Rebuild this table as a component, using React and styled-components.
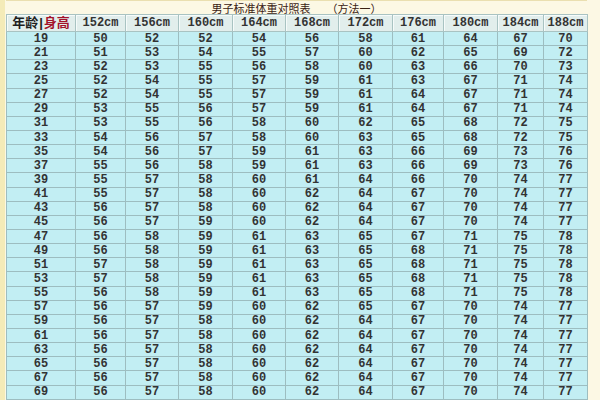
import React from 'react'
import styled, { createGlobalStyle } from 'styled-components'

const GlobalStyle = createGlobalStyle`
    html, body {
        margin: 0;
        padding: 0;
        background: #fcf8e4;
    }
`

const heights = [152, 156, 160, 164, 168, 172, 176, 180, 184, 188]
const colWidths = [69, 50, 53, 54, 53, 53, 54, 51, 54, 46, 44]

const rows = [
    [19, 50, 52, 52, 54, 56, 58, 61, 64, 67, 70],
    [21, 51, 53, 54, 55, 57, 60, 62, 65, 69, 72],
    [23, 52, 53, 55, 56, 58, 60, 63, 66, 70, 73],
    [25, 52, 54, 55, 57, 59, 61, 63, 67, 71, 74],
    [27, 52, 54, 55, 57, 59, 61, 64, 67, 71, 74],
    [29, 53, 55, 56, 57, 59, 61, 64, 67, 71, 74],
    [31, 53, 55, 56, 58, 60, 62, 65, 68, 72, 75],
    [33, 54, 56, 57, 58, 60, 63, 65, 68, 72, 75],
    [35, 54, 56, 57, 59, 61, 63, 66, 69, 73, 76],
    [37, 55, 56, 58, 59, 61, 63, 66, 69, 73, 76],
    [39, 55, 57, 58, 60, 61, 64, 66, 70, 74, 77],
    [41, 55, 57, 58, 60, 62, 64, 67, 70, 74, 77],
    [43, 56, 57, 58, 60, 62, 64, 67, 70, 74, 77],
    [45, 56, 57, 59, 60, 62, 64, 67, 70, 74, 77],
    [47, 56, 58, 59, 61, 63, 65, 67, 71, 75, 78],
    [49, 56, 58, 59, 61, 63, 65, 68, 71, 75, 78],
    [51, 57, 58, 59, 61, 63, 65, 68, 71, 75, 78],
    [53, 57, 58, 59, 61, 63, 65, 68, 71, 75, 78],
    [55, 56, 58, 59, 61, 63, 65, 68, 71, 75, 78],
    [57, 56, 57, 59, 60, 62, 65, 67, 70, 74, 77],
    [59, 56, 57, 58, 60, 62, 64, 67, 70, 74, 77],
    [61, 56, 57, 58, 60, 62, 64, 67, 70, 74, 77],
    [63, 56, 57, 58, 60, 62, 64, 67, 70, 74, 77],
    [65, 56, 57, 58, 60, 62, 64, 67, 70, 74, 77],
    [67, 56, 57, 58, 60, 62, 64, 67, 70, 74, 77],
    [69, 56, 57, 58, 60, 62, 64, 67, 70, 74, 77],
]

const App = () => {
    return (
        <Page>
            <GlobalStyle />
            <LeftBand />
            <Sheet>
                <TitleBar>
                    <Title>男子标准体重对照表</Title>
                    <Title>（方法一）</Title>
                </TitleBar>
                <Table>
                    <colgroup>
                        {colWidths.map((w, i) => (
                            <col key={i} style={{ width: w }} />
                        ))}
                    </colgroup>
                    <thead>
                        <tr>
                            <HeadCell>
                                <AgeLabel>年龄</AgeLabel>
                                <Divider>|</Divider>
                                <HeightLabel>身高</HeightLabel>
                            </HeadCell>
                            {heights.map((h) => (
                                <HeadCell key={h}>{h}cm</HeadCell>
                            ))}
                        </tr>
                    </thead>
                    <tbody>
                        {rows.map((r) => (
                            <Row key={r[0]}>
                                {r.map((v, i) => (
                                    <Cell key={i}>{v}</Cell>
                                ))}
                            </Row>
                        ))}
                    </tbody>
                </Table>
            </Sheet>
        </Page>
    )
}

export default App

const Page = styled.div`
    display: flex;
    width: 600px;
    height: 400px;
    overflow: hidden;
    background: #fcf8e4;
`

const LeftBand = styled.div`
    width: 5px;
    flex: none;
    background: #f4ebb8;
`

const Sheet = styled.div`
    display: flex;
    flex-direction: column;
    padding-left: 1px;
`

const TitleBar = styled.div`
    height: 14px;
    display: flex;
    align-items: center;
    justify-content: center;
    gap: 16px;
    width: 581px;
    border-top: 1px solid #eadfb0;
    box-sizing: border-box;
`

const Title = styled.span`
    font-family: 'Noto Sans CJK SC', sans-serif;
    font-size: 11px;
    line-height: 12px;
    color: #3a2214;
`

const Table = styled.table`
    table-layout: fixed;
    width: 581px;
    border-collapse: collapse;
    font-family: 'Liberation Mono', monospace;
    font-weight: bold;
    font-size: 12px;
`

const HeadCell = styled.th`
    height: 16px;
    padding: 0;
    text-align: center;
    background: #e2eeec;
    color: #333;
    font-weight: bold;
    border: 1px solid #a9c3c2;
    box-shadow: inset 1px 1px 0 #f6fbfa;
    line-height: 14px;
    white-space: nowrap;
`

const AgeLabel = styled.span`
    font-family: 'Noto Sans CJK SC', sans-serif;
    font-size: 13px;
    color: #1e1e1e;
`

const Divider = styled.span`
    font-family: 'Liberation Sans', sans-serif;
    font-size: 13px;
    color: #222;
    margin: 0 1px;
`

const HeightLabel = styled.span`
    font-family: 'Noto Sans CJK SC', sans-serif;
    font-size: 13px;
    color: #a3122b;
`

const Row = styled.tr`
    height: 14.15px;
`

const Cell = styled.td`
    padding: 0;
    text-align: center;
    background: #c2eef3;
    color: #333;
    border: 1px solid #9dbdc0;
    line-height: 12px;
`
